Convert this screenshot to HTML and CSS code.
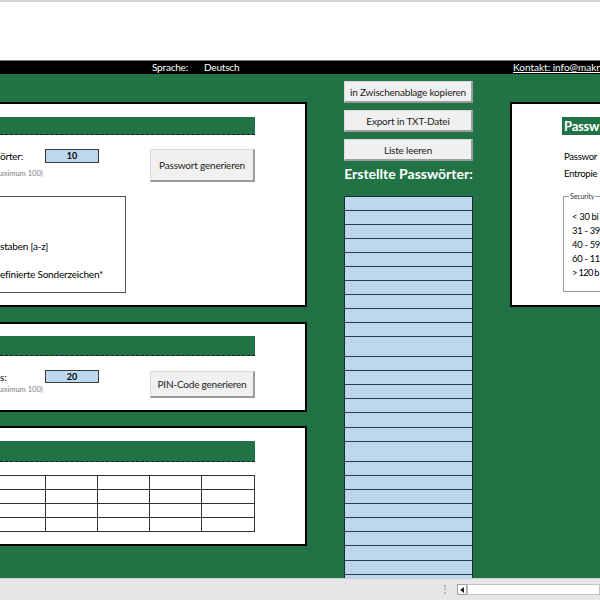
FILE: index.html
```html
<!DOCTYPE html>
<html lang="de">
<head>
<meta charset="utf-8">
<title>Passwort-Generator</title>
<link rel="stylesheet" href="styles.css">
</head>
<body>
<div class="topstrip"></div>
<div class="menubar">
  <span class="lang-label">Sprache:</span>
  <span class="lang-val">Deutsch</span>
  <span class="contact">Kontakt: info@makr</span>
</div>
<div class="sheet">
  <div class="col-left">
    <section class="panel panel-gen">
      <div class="bar bar-gen"></div>
      <div class="gen-row">
        <div class="field">
          <div class="field-line">
            <span class="label">örter:</span>
            <span class="num">10</span>
          </div>
          <div class="hint">aximum 100)</div>
        </div>
        <div class="btn btn-gen">Passwort generieren</div>
      </div>
      <div class="options">
        <span>staben [a-z]</span>
        <span>efinierte Sonderzeichen*</span>
      </div>
    </section>
    <section class="panel panel-pin">
      <div class="bar bar-pin"></div>
      <div class="pin-row">
        <div class="field">
          <div class="field-line field-line-pin">
            <span class="label">s:</span>
            <span class="num num-pin">20</span>
          </div>
          <div class="hint hint-pin">aximum 100)</div>
        </div>
        <div class="btn btn-pin">PIN-Code generieren</div>
      </div>
    </section>
    <section class="panel panel-tbl">
      <div class="bar bar-tbl"></div>
      <div class="grid">
        <div></div><div></div><div></div><div></div><div></div>
        <div></div><div></div><div></div><div></div><div></div>
        <div></div><div></div><div></div><div></div><div></div>
        <div></div><div></div><div></div><div></div><div></div>
      </div>
    </section>
  </div>
  <div class="col-mid">
    <div class="btn btn-mid">in Zwischenablage kopieren</div>
    <div class="btn btn-mid">Export in TXT-Datei</div>
    <div class="btn btn-mid">Liste leeren</div>
    <div class="list-title">Erstellte Passwörter:</div>
    <div class="list">
      <div class="row"></div><div class="row"></div><div class="row"></div><div class="row"></div><div class="row"></div>
      <div class="row"></div><div class="row"></div><div class="row"></div><div class="row"></div><div class="row"></div>
      <div class="row tall"></div>
      <div class="row"></div><div class="row"></div><div class="row"></div><div class="row"></div><div class="row r15"></div><div class="row"></div>
      <div class="row tall"></div>
      <div class="row"></div><div class="row"></div><div class="row"></div><div class="row"></div><div class="row"></div><div class="row"></div><div class="row r15"></div><div class="row"></div>
      <div class="row"></div>
    </div>
  </div>
  <div class="col-right">
    <section class="panel panel-stats">
      <div class="stats-title">Passw</div>
      <div class="stat stat-first">Passwor</div>
      <div class="stat">Entropie</div>
      <div class="security">
        <span class="security-label">Security</span>
        <div class="sec-item">&lt; 30 bi</div>
        <div class="sec-item">31 - 39</div>
        <div class="sec-item">40 - 59</div>
        <div class="sec-item">60 - 11</div>
        <div class="sec-item sec-last">&gt; 120 b</div>
      </div>
    </section>
  </div>
</div>
<div class="statusbar">
  <div class="dots"></div>
  <div class="scroll-btn"><span class="tri"></span></div>
  <div class="scroll-track"></div>
</div>
</body>
</html>
```
FILE: styles.css
```css
* { box-sizing: border-box; margin: 0; padding: 0; }
html, body { width: 600px; height: 600px; overflow: hidden; background: #fff; }
body { font-family: Lato, "Liberation Sans", sans-serif; font-size: 10px; letter-spacing: -0.2px; color: #000; }

.topstrip { height: 60px; border-top: 2px solid #d2d2d2; background: #fff; }

.menubar {
  height: 14px; border-top: 1px solid #7a7a7a; background: #000; color: #fff;
  display: flex; align-items: center; line-height: 13px; white-space: nowrap;
}
.lang-label { margin-left: 152px; width: 52px; flex-shrink: 0; }
.lang-val { width: 309px; flex-shrink: 0; }
.contact { flex: 1; min-width: 0; text-decoration: underline; letter-spacing: 0; }

.sheet { height: 504px; background: #217346; display: flex; align-items: flex-start; }

.col-left { width: 307px; flex-shrink: 0; padding-top: 28px; display: flex; flex-direction: column; }
.panel { background: #fff; border: 2px solid #000; }
.col-left .panel { border-left: none; }
.panel-gen { height: 205px; }
.panel-pin { height: 90px; margin-top: 15px; }
.panel-tbl { height: 120px; margin-top: 14px; }

.bar { width: 255px; background: #217346; border-bottom: 1px dashed #1a1a1a; }
.bar-gen { margin-top: 13px; height: 18px; }
.bar-pin { margin-top: 12px; height: 20px; }
.bar-tbl { margin-top: 13px; height: 21px; }

.gen-row, .pin-row { display: flex; align-items: flex-start; margin-top: 14px; }
.field { width: 150px; flex-shrink: 0; }
.field-line { display: flex; align-items: center; height: 14px; }
.label { width: 45px; line-height: 14px; }
.num {
  width: 54px; height: 14px; background: #bdd7ee; border: 1px solid #3a3a3a;
  font-weight: bold; font-size: 9px; line-height: 12px; text-align: center; letter-spacing: 0;
}
.num-pin { height: 13px; line-height: 11px; }
.field-line-pin { height: 13px; }
.hint { font-size: 7.5px; line-height: 8px; color: #7a7a7a; margin-top: 7px; letter-spacing: 0; }
.hint-pin { margin-top: 3px; }

.btn {
  background: #f0f0f0; color: #222; border: 1px solid #dadada;
  border-right: 2px solid #9c9c9c; border-bottom: 2px solid #9c9c9c;
  display: flex; align-items: center; justify-content: center; white-space: nowrap;
}
.btn-gen { width: 105px; height: 33px; }
.btn-pin { width: 105px; height: 27px; margin-top: 1px; }

.options {
  margin-top: 14px; width: 126px; height: 97px; border: 1px solid #555; border-left: none;
  padding-top: 42px; display: flex; flex-direction: column; gap: 14px; line-height: 14px; white-space: nowrap;
}

.grid {
  margin-top: 13px; width: 255px; display: grid;
  grid-template-columns: 46px 52px 52px 52px 53px; border-top: 1px solid #333;
}
.grid div { height: 14px; border-right: 1px solid #333; border-bottom: 1px solid #333; }

.col-mid {
  width: 129px; flex-shrink: 0; margin-left: 37px; padding-top: 7px; height: 504px;
  display: flex; flex-direction: column;
}
.btn-mid { height: 22px; }
.btn-mid + .btn-mid { margin-top: 7px; }
.list-title {
  color: #fff; font-weight: bold; font-size: 14px; line-height: 20px; height: 20px;
  text-align: center; margin-top: 3px; white-space: nowrap; letter-spacing: 0;
}
.list {
  margin-top: 12px; flex: 1; background: #bdd7ee; overflow: hidden;
  border: 1px solid #1c2a38; border-bottom: none;
}
.row { height: 14px; border-bottom: 1px solid #2a3a4c; }
.row.tall { height: 20px; }
.row.r15 { height: 15px; }

.col-right { margin-left: 37px; padding-top: 28px; flex: 1; min-width: 0; }
.panel-stats { height: 205px; border-right: none; }
.stats-title {
  margin: 13px 0 0 50px; height: 18px; background: #217346; color: #fff;
  font-weight: bold; font-size: 13px; line-height: 18px; padding-left: 2px; white-space: nowrap; letter-spacing: -0.2px;
}
.stat { margin-left: 52px; line-height: 14px; margin-top: 3px; white-space: nowrap; font-size: 9.6px; letter-spacing: -0.3px; }
.stat-first { margin-top: 15px; }
.security {
  position: relative; margin: 15px 0 0 51px; height: 96px;
  border: 1px solid #9a9a9a; border-right: none; padding: 13px 0 0 8px;
}
.security-label {
  position: absolute; left: 5px; top: -5px; background: #fff; padding: 0 1px;
  font-size: 7px; line-height: 9px; color: #333; letter-spacing: -0.1px;
}
.sec-item { line-height: 14px; white-space: nowrap; font-size: 9.4px; letter-spacing: -0.3px; }
.sec-last { letter-spacing: -0.7px; }

.statusbar {
  height: 22px; background: #e6e6e6; border-top: 1px solid #cfcfcf;
  display: flex; align-items: center;
}
.dots { margin-left: 444px; width: 2px; height: 9px; border-left: 2px dotted #b4b4b4; }
.scroll-btn {
  margin-left: 11px; width: 10px; height: 11px; background: #fff; border: 1px solid #a0a0a0;
  display: flex; align-items: center; justify-content: center;
}
.tri { width: 0; height: 0; border-top: 3px solid transparent; border-bottom: 3px solid transparent; border-right: 4px solid #222; }
.scroll-track { flex: 1; height: 11px; background: #fff; border: 1px solid #c4c4c4; }
```
